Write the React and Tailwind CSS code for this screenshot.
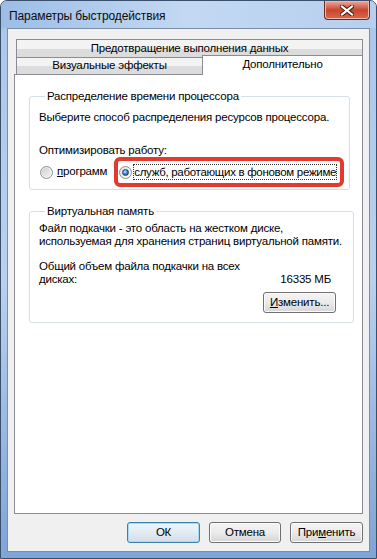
import React from "react";

function Radio({ checked }) {
  return (
    <span className="relative flex h-[13px] w-[13px] shrink-0 items-center justify-center rounded-full border border-[#8e8f8f] bg-gradient-to-br from-[#e2e2e2] to-[#fcfcfc]">
      {checked ? (
        <span className="h-[7px] w-[7px] rounded-full border border-[#1b3f6e] bg-[radial-gradient(circle_at_40%_35%,#c9e6ff,#2a7fd4_55%,#0b3d7a)]" />
      ) : (
        <span className="h-[9px] w-[9px] rounded-full bg-gradient-to-br from-[#cfcfcf] to-[#f4f4f4]" />
      )}
    </span>
  );
}

function WinButton({ children, focused, className = "" }) {
  return (
    <button
      className={
        "flex h-[21px] items-center justify-center rounded-[3px] border text-black " +
        (focused
          ? "border-[#3c7fb1] bg-gradient-to-b from-[#eaf6fd] via-[#e3ecf3] to-[#d2dde7] shadow-[inset_0_0_0_1px_#a7d9f5] "
          : "border-[#707070] bg-gradient-to-b from-[#f4f4f4] via-[#ebebeb] to-[#d6d6d6] shadow-[inset_0_0_0_1px_#fbfbfb] ") +
        className
      }
    >
      {children}
    </button>
  );
}

function CloseButton() {
  return (
    <div className="flex h-[19px] w-[46px] items-center justify-center rounded-b-[4px] border border-t-0 border-[#6b2a22] bg-gradient-to-b from-[#e9a99b] via-[#c8452f] to-[#d96a4d] shadow-[inset_0_0_0_1px_#f0b7a8]">
      <svg width="14" height="11" viewBox="0 0 14 11">
        <path d="M2 1.5 L12 9.5 M12 1.5 L2 9.5" stroke="#4a1a14" strokeWidth="4.2" strokeLinecap="square" />
        <path d="M2 1.5 L12 9.5 M12 1.5 L2 9.5" stroke="#ffffff" strokeWidth="2.2" strokeLinecap="square" />
      </svg>
    </div>
  );
}

export default function App() {
  return (
    <div className="flex h-[559px] w-[377px] flex-col overflow-hidden whitespace-nowrap rounded-t-[7px] border border-[#3a4f6b] bg-gradient-to-b from-[#a9c6ea] via-[#b9d1ee] to-[#7fa4d6] font-['Liberation_Sans',Arial,sans-serif] text-[11.5px] tracking-[-0.2px] text-black">
      {/* Title bar */}
      <div className="flex h-[27px] shrink-0 items-start justify-between bg-gradient-to-r from-[#9dbde6] via-[#c3d9f2] to-[#b6cfee]">
        <div className="pl-[8px] pt-[8px] text-[12px] leading-[14px] tracking-[-0.1px] text-[#0b0b0b]">Параметры быстродействия</div>
        <div className="pr-[6px]">
          <CloseButton />
        </div>
      </div>

      {/* Client area */}
      <div className="mx-[6px] mb-[6px] flex flex-1 flex-col border border-[#7b8ea8] bg-[#f0f0f0] px-[6px] pt-[10px]">
        {/* Tabs */}
        <div className="flex flex-col">
          <div className="ml-[2px] flex h-[19px] items-center justify-center border border-[#898c95] bg-gradient-to-b from-[#f3f3f3] from-50% to-[#dcdcdc] to-50%">
            Предотвращение выполнения данных
          </div>
          <div className="flex h-[16px] items-end">
            <div className="-mb-px ml-[2px] flex h-[18px] w-[187px] items-center justify-center border border-[#898c95] bg-gradient-to-b from-[#f3f3f3] from-50% to-[#dcdcdc] to-50%">
              Визуальные эффекты
            </div>
            <div className="relative z-10 -mb-px -ml-px flex h-[20px] flex-1 items-center justify-center border border-b-0 border-[#898c95] bg-white pb-[1px]">
              Дополнительно
            </div>
          </div>
        </div>

        {/* Panel */}
        <div className="flex h-[440px] flex-col border border-[#898c95] bg-white pl-[14px] pr-[12px] pt-[14px]">
          <fieldset className="rounded-[3px] border border-[#d5dfe5] pb-[2px] pl-[9px] pr-[2px]">
            <legend className="ml-[6px] px-[2px] leading-[14px]">Распределение времени процессора</legend>
            <div className="mt-[7px] leading-[14px]">Выберите способ распределения ресурсов процессора.</div>
            <div className="mt-[19px] leading-[14px]">Оптимизировать работу:</div>
            <div className="flex items-center">
              <div className="ml-[1px] flex items-center gap-[4px]">
                <Radio checked={false} />
                <span>
                  <span className="underline">п</span>рограмм
                </span>
              </div>
              <div className="ml-[7px] flex h-[30px] items-center gap-[1px] rounded-[6px] border-[4px] border-[#e23a2e] pl-[1px] pr-[3px]">
                <Radio checked />
                <span className="border border-dotted border-[#333] leading-[14px] tracking-[-0.3px]">
                  служб, работающих в фоновом режиме
                </span>
              </div>
            </div>
          </fieldset>

          <fieldset className="mt-[14px] rounded-[3px] border border-[#d5dfe5] pb-[9px] pl-[9px] pr-[11px]">
            <legend className="ml-[6px] px-[2px] leading-[14px]">Виртуальная память</legend>
            <div className="mt-[4px] leading-[13px]">
              Файл подкачки - это область на жестком диске,
              <br />
              используемая для хранения страниц виртуальной памяти.
            </div>
            <div className="mt-[12px] leading-[13px]">Общий объем файла подкачки на всех</div>
            <div className="flex items-center justify-between leading-[13px]">
              <span>дисках:</span>
              <span className="pr-[11px]">16335 МБ</span>
            </div>
            <div className="mt-[6px] flex justify-end pr-[6px]">
              <WinButton className="w-[73px]">
                <span>
                  <span className="underline">И</span>зменить...
                </span>
              </WinButton>
            </div>
          </fieldset>
        </div>

        {/* Dialog buttons */}
        <div className="mt-[8px] flex justify-end gap-[9px]">
          <WinButton focused className="w-[73px]">
            ОК
          </WinButton>
          <WinButton className="w-[72px]">Отмена</WinButton>
          <WinButton className="w-[73px]">
            <span>
              При<span className="underline">м</span>енить
            </span>
          </WinButton>
        </div>
      </div>
    </div>
  );
}
